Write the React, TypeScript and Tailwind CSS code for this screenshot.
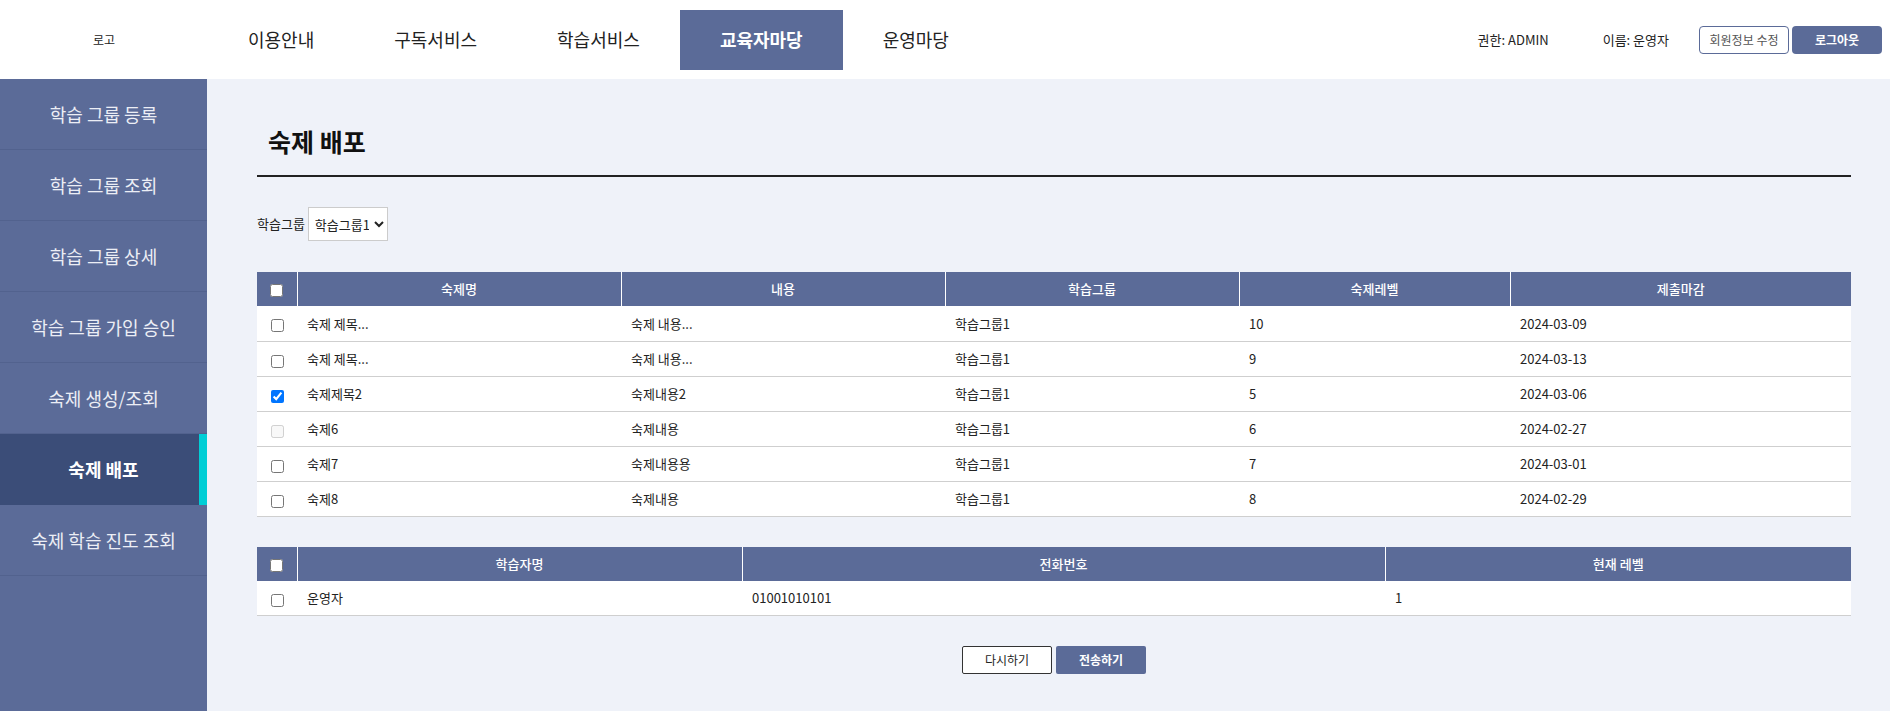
import React from "react";

const navItems = ["이용안내", "구독서비스", "학습서비스", "교육자마당", "운영마당"];
const sideItems = [
  "학습 그룹 등록",
  "학습 그룹 조회",
  "학습 그룹 상세",
  "학습 그룹 가입 승인",
  "숙제 생성/조회",
  "숙제 배포",
  "숙제 학습 진도 조회",
];

const homeworks = [
  { title: "숙제 제목...", content: "숙제 내용...", group: "학습그룹1", level: "10", due: "2024-03-09" },
  { title: "숙제 제목...", content: "숙제 내용...", group: "학습그룹1", level: "9", due: "2024-03-13" },
  { title: "숙제제목2", content: "숙제내용2", group: "학습그룹1", level: "5", due: "2024-03-06", checked: true },
  { title: "숙제6", content: "숙제내용", group: "학습그룹1", level: "6", due: "2024-02-27", disabled: true },
  { title: "숙제7", content: "숙제내용용", group: "학습그룹1", level: "7", due: "2024-03-01" },
  { title: "숙제8", content: "숙제내용", group: "학습그룹1", level: "8", due: "2024-02-29" },
];

const font = { fontFamily: '"Noto Sans CJK KR", "Noto Sans", sans-serif' };

const Th = ({ children, first }: { children?: React.ReactNode; first?: boolean }) => (
  <th
    className={
      "h-[34px] bg-[#5b6b98] text-white text-[13px] font-medium text-center p-0 " +
      (first ? "" : "border-l border-white")
    }
  >
    {children}
  </th>
);

const Td = ({ children }: { children?: React.ReactNode }) => (
  <td className="h-[35px] px-[10px] text-[13px] text-[#222]">{children}</td>
);

const CheckCell = ({ checked, disabled }: { checked?: boolean; disabled?: boolean }) => (
  <td className="h-[35px] text-center p-0">
    <input
      type="checkbox"
      className="m-0 align-middle"
      defaultChecked={checked}
      disabled={disabled}
    />
  </td>
);

export default function App() {
  return (
    <div className="min-h-screen flex flex-col bg-[#eff2f9]" style={font}>
      <header className="h-[79px] bg-white flex items-center">
        <div className="w-[208px] text-center text-[12px] text-[#222]">로고</div>
        <nav className="flex items-center h-full">
          {navItems.map((n) => (
            <a
              key={n}
              href="#"
              className={
                "h-[60px] flex items-center px-10 text-[18px] " +
                (n === "교육자마당" ? "bg-[#5b6b98] text-white font-bold" : "text-[#222]")
              }
            >
              {n}
            </a>
          ))}
        </nav>
        <div className="ml-auto flex items-center pr-[8px] text-[13px] text-[#222]">
          <span className="mr-[54px]">권한: ADMIN</span>
          <span className="mr-[30px]">이름: 운영자</span>
          <button className="w-[90px] h-[28px] border border-[#5b6b98] rounded-[4px] bg-white text-[#555] text-[12px]">
            회원정보 수정
          </button>
          <button className="ml-[3px] w-[90px] h-[28px] rounded-[4px] bg-[#5b6b98] text-white font-bold text-[12px]">
            로그아웃
          </button>
        </div>
      </header>

      <div className="flex flex-1">
        <aside className="w-[207px] bg-[#5b6b98] shrink-0">
          {sideItems.map((s) => {
            const active = s === "숙제 배포";
            return (
              <div
                key={s}
                className={
                  "h-[71px] flex items-center justify-center text-[18px] " +
                  (active
                    ? "bg-[#3b4d78] text-white font-bold shadow-[inset_-8px_0_0_#00ced6]"
                    : "text-[#eceef5] border-b border-[#52628e]")
                }
              >
                {s}
              </div>
            );
          })}
        </aside>

        <main className="flex-1 pl-[50px] pr-[39px]">
          <div className="pt-[44px] pb-[15px] border-b-2 border-[#222]">
            <h1 className="pl-[11px] text-[25px] leading-[37px] font-bold text-[#111]">숙제 배포</h1>
          </div>

          <div className="mt-[30px] flex items-center gap-[3px] text-[13px] text-[#222]">
            <span>학습그룹</span>
            <select className="w-[80px] h-[34px] bg-white border border-[#ccc] text-[13px] text-[#222] px-[2px]">
              <option>학습그룹1</option>
            </select>
          </div>

          <table className="mt-[31px] w-full table-fixed border-collapse bg-white">
            <colgroup>
              <col className="w-[40px]" />
              <col className="w-[324px]" />
              <col className="w-[324px]" />
              <col className="w-[294px]" />
              <col className="w-[271px]" />
              <col />
            </colgroup>
            <thead>
              <tr>
                <Th first>
                  <input type="checkbox" className="m-0 align-middle" />
                </Th>
                <Th>숙제명</Th>
                <Th>내용</Th>
                <Th>학습그룹</Th>
                <Th>숙제레벨</Th>
                <Th>제출마감</Th>
              </tr>
            </thead>
            <tbody>
              {homeworks.map((h, i) => (
                <tr key={i} className="border-b border-[#cfcfcf]">
                  <CheckCell checked={h.checked} disabled={h.disabled} />
                  <Td>{h.title}</Td>
                  <Td>{h.content}</Td>
                  <Td>{h.group}</Td>
                  <Td>{h.level}</Td>
                  <Td>{h.due}</Td>
                </tr>
              ))}
            </tbody>
          </table>

          <table className="mt-[30px] w-full table-fixed border-collapse bg-white">
            <colgroup>
              <col className="w-[40px]" />
              <col className="w-[445px]" />
              <col className="w-[643px]" />
              <col />
            </colgroup>
            <thead>
              <tr>
                <Th first>
                  <input type="checkbox" className="m-0 align-middle" />
                </Th>
                <Th>학습자명</Th>
                <Th>전화번호</Th>
                <Th>현재 레벨</Th>
              </tr>
            </thead>
            <tbody>
              <tr className="border-b border-[#cfcfcf]">
                <CheckCell />
                <Td>운영자</Td>
                <Td>01001010101</Td>
                <Td>1</Td>
              </tr>
            </tbody>
          </table>

          <div className="mt-[30px] flex justify-center gap-[4px]">
            <button className="w-[90px] h-[28px] bg-white border border-[#333] rounded-[2px] text-[12px] text-[#222]">
              다시하기
            </button>
            <button className="w-[90px] h-[28px] bg-[#5b6b98] rounded-[2px] text-[12px] text-white font-bold">
              전송하기
            </button>
          </div>
        </main>
      </div>
    </div>
  );
}
